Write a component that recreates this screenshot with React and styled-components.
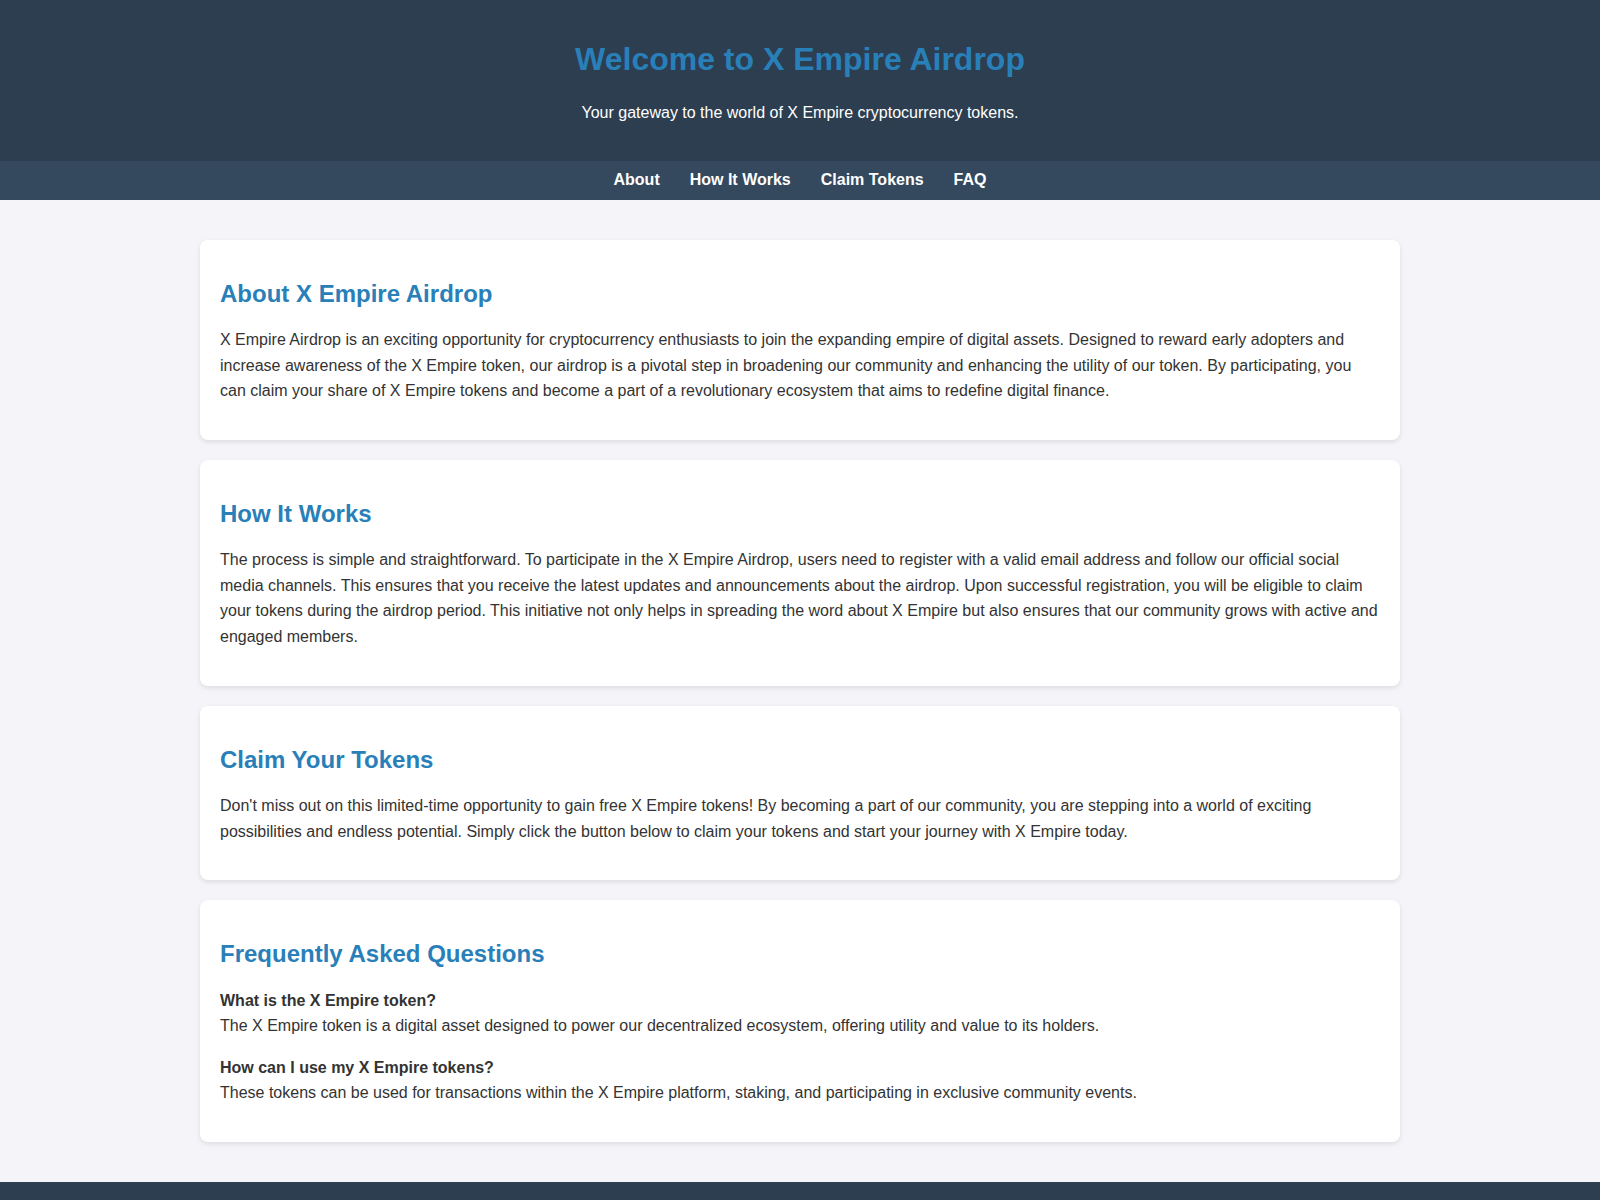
import React from "react";
import styled, { createGlobalStyle } from "styled-components";

const GlobalStyle = createGlobalStyle`
  html, body {
    margin: 0;
    padding: 0;
  }
  body {
    font-family: "Liberation Sans", Arial, sans-serif;
    background: #f4f4f9;
    color: #333;
    line-height: 1.6;
  }
`;

const Header = styled.header`
  background: #2c3e50;
  color: #fff;
  padding: 20px 0;
  text-align: center;
`;

const Title = styled.h1`
  margin: 0.67em 0;
  font-size: 32px;
  line-height: 1.15;
  color: #2980b9;
`;

const Tagline = styled.p`
  margin: 16px 0;
  font-size: 16px;
`;

const Nav = styled.nav`
  background: #34495e;
  padding: 10px 0;
  display: flex;
  justify-content: center;
  line-height: 1.15;
`;

const NavLink = styled.a`
  color: #fff;
  text-decoration: none;
  font-weight: bold;
  margin: 0 15px;
  font-size: 16px;
`;

const Main = styled.main`
  max-width: 1200px;
  margin: 0 auto;
  padding: 20px 0;
`;

const Section = styled.section`
  background: #fff;
  margin: 20px 0;
  padding: 20px;
  border-radius: 8px;
  box-shadow: 0 2px 5px rgba(0, 0, 0, 0.1);
`;

const SectionTitle = styled.h2`
  margin: 0.83em 0;
  font-size: 24px;
  line-height: 1.15;
  color: #2980b9;
`;

const Text = styled.p`
  margin: 16px 0;
  font-size: 16px;
`;

const Footer = styled.footer`
  background: #2c3e50;
  color: #fff;
  text-align: center;
  padding: 20px 0;
`;

export default function App() {
  return (
    <>
      <GlobalStyle />
      <Header>
        <Title>Welcome to X Empire Airdrop</Title>
        <Tagline>Your gateway to the world of X Empire cryptocurrency tokens.</Tagline>
      </Header>
      <Nav>
        <NavLink href="#about">About</NavLink>
        <NavLink href="#how">How It Works</NavLink>
        <NavLink href="#claim">Claim Tokens</NavLink>
        <NavLink href="#faq">FAQ</NavLink>
      </Nav>
      <Main>
        <Section id="about">
          <SectionTitle>About X Empire Airdrop</SectionTitle>
          <Text>
            X Empire Airdrop is an exciting opportunity for cryptocurrency enthusiasts to join the expanding empire of digital assets. Designed to reward early adopters and increase awareness of the X Empire token, our airdrop is a pivotal step in broadening our community and enhancing the utility of our token. By participating, you can claim your share of X Empire tokens and become a part of a revolutionary ecosystem that aims to redefine digital finance.
          </Text>
        </Section>
        <Section id="how">
          <SectionTitle>How It Works</SectionTitle>
          <Text>
            The process is simple and straightforward. To participate in the X Empire Airdrop, users need to register with a valid email address and follow our official social media channels. This ensures that you receive the latest updates and announcements about the airdrop. Upon successful registration, you will be eligible to claim your tokens during the airdrop period. This initiative not only helps in spreading the word about X Empire but also ensures that our community grows with active and engaged members.
          </Text>
        </Section>
        <Section id="claim">
          <SectionTitle>Claim Your Tokens</SectionTitle>
          <Text>
            Don't miss out on this limited-time opportunity to gain free X Empire tokens! By becoming a part of our community, you are stepping into a world of exciting possibilities and endless potential. Simply click the button below to claim your tokens and start your journey with X Empire today.
          </Text>
        </Section>
        <Section id="faq">
          <SectionTitle>Frequently Asked Questions</SectionTitle>
          <Text>
            <strong>What is the X Empire token?</strong>
            <br />
            The X Empire token is a digital asset designed to power our decentralized ecosystem, offering utility and value to its holders.
          </Text>
          <Text>
            <strong>How can I use my X Empire tokens?</strong>
            <br />
            These tokens can be used for transactions within the X Empire platform, staking, and participating in exclusive community events.
          </Text>
        </Section>
      </Main>
      <Footer>
        <Text>&copy; 2024 X Empire Airdrop. All rights reserved.</Text>
      </Footer>
    </>
  );
}
